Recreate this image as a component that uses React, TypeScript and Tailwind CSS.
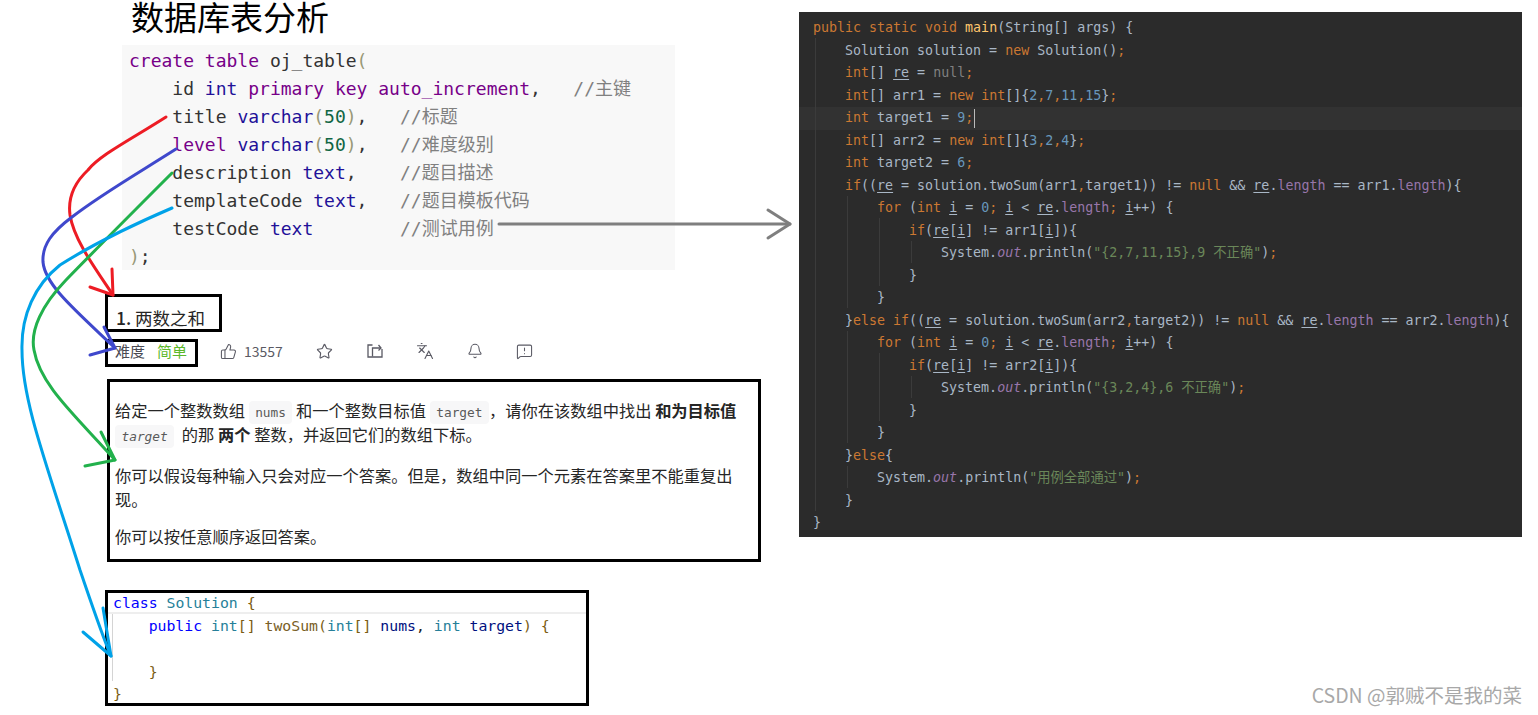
import { Bell, Languages, MessageSquareWarning, Star, ThumbsUp } from "lucide-react";

const monoFont = "[font-family:'DejaVu_Sans_Mono','Noto_Sans_CJK_SC',monospace]";
const sansFont = "[font-family:'Noto_Sans_CJK_SC','Noto_Sans',sans-serif]";

type Token = [string, string?];

// sql block colours
const sKey = "text-[#770088]";
const sType = "text-[#221199]";
const sParen = "text-[#999977]";
const sNum = "text-[#116644]";
const sNote = "text-[#808080]";

const sqlLines: Token[][] = [
  [["create table", sKey], [" oj_table"], ["(", sParen]],
  [["    id "], ["int", sType], [" "], ["primary key auto_increment", sKey], [",   "], ["//主键", sNote]],
  [["    title "], ["varchar", sType], ["(", sParen], ["50", sNum], [")", sParen], [",   "], ["//标题", sNote]],
  [["    "], ["level", sKey], [" "], ["varchar", sType], ["(", sParen], ["50", sNum], [")", sParen], [",   "], ["//难度级别", sNote]],
  [["    description "], ["text", sType], [",    "], ["//题目描述", sNote]],
  [["    templateCode "], ["text", sType], [",   "], ["//题目模板代码", sNote]],
  [["    testCode "], ["text", sType], ["        "], ["//测试用例", sNote]],
  [[")", sParen], [";"]],
];

// idea darcula colours
const kw = "text-[#cc7832]";
const num = "text-[#6897bb]";
const str = "text-[#6a8759]";
const fld = "text-[#9876aa]";
const fldI = "text-[#9876aa] italic";
const fn = "text-[#ffc66d]";
const gray = "text-[#808080]";
const ul = "underline underline-offset-2";

const javaLines: Token[][] = [
  [["public static void ", kw], ["main", fn], ["(String[] args) {"]],
  [["    Solution solution = "], ["new ", kw], ["Solution()"], [";", kw]],
  [["    "], ["int", kw], ["[] "], ["re", ul], [" = "], ["null", gray], [";", kw]],
  [["    "], ["int", kw], ["[] arr1 = "], ["new int", kw], ["[]{"], ["2", num], [",", kw], ["7", num], [",", kw], ["11", num], [",", kw], ["15", num], ["}"], [";", kw]],
  [["    "], ["int ", kw], ["target1 = "], ["9", num], [";", kw]],
  [["    "], ["int", kw], ["[] arr2 = "], ["new int", kw], ["[]{"], ["3", num], [",", kw], ["2", num], [",", kw], ["4", num], ["}"], [";", kw]],
  [["    "], ["int ", kw], ["target2 = "], ["6", num], [";", kw]],
  [["    "], ["if", kw], ["(("], ["re", ul], [" = solution.twoSum(arr1"], [",", kw], ["target1)) != "], ["null ", kw], ["&& "], ["re", ul], ["."], ["length", fld], [" == arr1."], ["length", fld], ["){"]],
  [["        "], ["for ", kw], ["("], ["int ", kw], ["i", ul], [" = "], ["0", num], ["; ", kw], ["i", ul], [" < "], ["re", ul], ["."], ["length", fld], ["; ", kw], ["i", ul], ["++) {"]],
  [["            "], ["if", kw], ["("], ["re", ul], ["["], ["i", ul], ["] != arr1["], ["i", ul], ["]){"]],
  [["                System."], ["out", fldI], [".println("], ["\"{2,7,11,15},9 不正确\"", str], [")"], [";", kw]],
  [["            }"]],
  [["        }"]],
  [["    }"], ["else if", kw], ["(("], ["re", ul], [" = solution.twoSum(arr2"], [",", kw], ["target2)) != "], ["null ", kw], ["&& "], ["re", ul], ["."], ["length", fld], [" == arr2."], ["length", fld], ["){"]],
  [["        "], ["for ", kw], ["("], ["int ", kw], ["i", ul], [" = "], ["0", num], ["; ", kw], ["i", ul], [" < "], ["re", ul], ["."], ["length", fld], ["; ", kw], ["i", ul], ["++) {"]],
  [["            "], ["if", kw], ["("], ["re", ul], ["["], ["i", ul], ["] != arr2["], ["i", ul], ["]){"]],
  [["                System."], ["out", fldI], [".println("], ["\"{3,2,4},6 不正确\"", str], [")"], [";", kw]],
  [["            }"]],
  [["        }"]],
  [["    }"], ["else", kw], ["{"]],
  [["        System."], ["out", fldI], [".println("], ["\"用例全部通过\"", str], [")"], [";", kw]],
  [["    }"]],
  [["}"]],
];

// x, top, bottom inside the page
const guides = [
  [815, 38, 511],
  [847, 196, 308],
  [847, 331, 443],
  [847, 466, 488],
  [879, 218, 286],
  [879, 353, 421],
  [911, 241, 263],
  [911, 376, 398],
];

// vscode light colours
const vBlue = "text-[#0000ff]";
const vType = "text-[#267f99]";
const vFn = "text-[#795e26]";
const vVar = "text-[#001080]";
const vBr = "text-[#7a5c12]";

const solutionLines: Token[][] = [
  [["class", vBlue], [" "], ["Solution", vType], [" "], ["{", vBr]],
  [["    "], ["public", vBlue], [" "], ["int", vType], ["[]", vBr], [" "], ["twoSum", vFn], ["(", vBr], ["int", vType], ["[]", vBr], [" "], ["nums", vVar], [", "], ["int", vType], [" "], ["target", vVar], [")", vBr], [" "], ["{", vBr]],
  [[" "]],
  [["    "], ["}", vBr]],
  [["}", vBr]],
];

const solutionRows = [
  "h-[21px] leading-[20px] border-b-[2px] border-[#eeeeee]",
  "h-[24px] leading-[24px]",
  "h-[22.5px] leading-[22.5px]",
  "h-[22.5px] leading-[22.5px]",
  "h-[22.5px] leading-[22.5px]",
];

function Tokens({ line }: { line: Token[] }) {
  return (
    <>
      {line.map(([text, cls], i) => (
        <span key={i} className={cls}>
          {text}
        </span>
      ))}
    </>
  );
}

function Chip({ children, italic }: { children: string; italic?: boolean }) {
  return (
    <code className={`${monoFont} rounded-[4px] bg-[#f7f7f8] px-[6.5px] py-[4px] text-[12.8px] leading-[18px] text-[#5a5a5a] ${italic ? "italic" : ""}`}>
      {children}
    </code>
  );
}

function ShareIcon() {
  return (
    <svg width="16" height="14" viewBox="0 0 16 14" fill="none" stroke="currentColor" strokeWidth="1.3">
      <path d="M5.5 1H1V13H15V5" />
      <path d="M5.5 12.5V4H13" />
      <path d="M11.5 1L14 4L11.5 6.5" />
    </svg>
  );
}

function Arrows() {
  return (
    <svg className="absolute left-0 top-0 pointer-events-none" width="1538" height="715" fill="none" strokeWidth="3" strokeLinecap="round" strokeLinejoin="round">
      <g stroke="#ed1c24">
        <path d="M166 117C130 140 100 155 88 170C72 185 68 200 70 215C74 240 95 268 113 295" />
        <path d="M112 269L113 295L90 287" />
      </g>
      <g stroke="#3f48cc">
        <path d="M176 149C140 172 100 195 72 217C52 232 42 245 43 262C45 285 75 310 115 348" />
        <path d="M104 327L115 348L90 355" />
      </g>
      <g stroke="#22b14c">
        <path d="M172 173C135 210 100 245 66 280C42 305 30 330 34 350C40 385 75 415 115 460" />
        <path d="M101 432L115 460L85 466" />
      </g>
      <g stroke="#00a2e8">
        <path d="M172 208C130 226 95 243 60 265C35 285 21 315 22 350C22 400 45 460 80 570C92 605 102 635 111 656" />
        <path d="M103 608L111 656L83 632" />
      </g>
      <g stroke="#7f7f7f">
        <path d="M499 224H790" />
        <path d="M768 210L790 224L768 238" />
      </g>
    </svg>
  );
}

export default function App() {
  return (
    <div className={`relative flex h-[715px] w-[1538px] overflow-hidden bg-white ${sansFont}`}>
      {/* left side, the problem */}
      <div className="box-content flex w-[694px] shrink-0 flex-col pl-[105px]">
        <h1 className="h-[45px] pl-[26px] text-[33px] font-normal leading-[38px] text-black [font-family:'Liberation_Sans','Noto_Sans_CJK_SC',sans-serif]">数据库表分析</h1>

        <div className={`ml-[17px] h-[225px] w-[553px] bg-[#f8f8f8] pl-[7px] pt-[2px] text-[18px] leading-[28px] text-[#333333] whitespace-pre ${monoFont}`}>
          {sqlLines.map((line, i) => (
            <div key={i}>
              <Tokens line={line} />
            </div>
          ))}
        </div>

        <div className="mt-[24px] h-[38px] w-[117px] border-[3px] border-black pl-[8px] pt-[9px] text-[17.5px] leading-[24px] text-[#262626]">
          <span className="font-medium">1.</span> 两数之和
        </div>

        <div className="mt-[7px] flex h-[28px] items-start text-[#5a5a64]">
          <div className="flex h-[28px] w-[93px] items-start border-[3px] border-black pl-[7px] text-[15px] leading-[18px]">
            <span className="text-[#4a4a52]">难度</span>
            <span className="ml-[12px] text-[#5cb82a]">简单</span>
          </div>
          <div className="flex h-[24px] items-center">
            <ThumbsUp className="ml-[22px]" size={17} strokeWidth={1.5} />
            <span className="ml-[7px] w-[50px] text-[14px]">13557</span>
            <Star className="ml-[22px]" size={17} strokeWidth={1.6} />
            <div className="ml-[34px] flex"><ShareIcon /></div>
            <Languages className="ml-[33px]" size={18} strokeWidth={1.5} />
            <Bell className="ml-[33px]" size={16} strokeWidth={1.6} />
            <MessageSquareWarning className="ml-[33px]" size={17} strokeWidth={1.5} />
          </div>
        </div>

        <div className="ml-[2px] mt-[12px] h-[183px] w-[654px] border-[3px] border-black pl-[5px] pr-[13px] pt-[17px] text-[16.25px] leading-[23.5px] text-[#262626]">
          <p>
            给定一个整数数组 <Chip>nums</Chip> 和一个整数目标值 <Chip>target</Chip>，请你在该数组中找出 <b>和为目标值</b>
            <span> <Chip italic>target</Chip></span><span className="ml-[4px]"> 的那 </span><b>两个</b> 整数，并返回它们的数组下标。
          </p>
          <p className="mt-[18px]">你可以假设每种输入只会对应一个答案。但是，数组中同一个元素在答案里不能重复出现。</p>
          <p className="mt-[14px]">你可以按任意顺序返回答案。</p>
        </div>

        <div className={`relative mt-[28px] h-[116px] w-[484px] border-[3px] border-black pl-[5px] text-[14.8px] text-[#1e1e1e] whitespace-pre ${monoFont}`}>
          {solutionLines.map((line, i) => (
            <div key={i} className={`${solutionRows[i]} ${i === 0 ? "-ml-[5px] pl-[5px]" : ""}`}>
              <Tokens line={line} />
            </div>
          ))}
          <div className="absolute left-[4px] top-[21px] h-[67px] w-[1px] bg-[#d4d4d4]" />
        </div>
      </div>

      {/* right side, the test main */}
      <div className={`relative mt-[12px] h-[525px] w-[723px] bg-[#2b2b2b] pl-[14px] pt-[5px] text-[13.3px] leading-[22.5px] text-[#a9b7c6] whitespace-pre ${monoFont}`}>
        {javaLines.map((line, i) => (
          <div key={i} className={i === 4 ? "-ml-[14px] flex h-[22.5px] items-stretch bg-[#323232] pl-[14px]" : "h-[22.5px]"}>
            <Tokens line={line} />
            {i === 4 && <span className="my-[2px] ml-[1px] w-[1px] bg-[#bbbbbb]" />}
          </div>
        ))}
        {guides.map(([x, top, bottom]) => (
          <div
            key={`${x}-${top}`}
            className="absolute w-[1px] bg-[#3b3b3b]"
            style={{ left: x - 799, top: top - 12, height: bottom - top }}
          />
        ))}
      </div>

      <Arrows />

      <div className="absolute bottom-[8px] right-[16px] text-[19.5px] leading-[24px] text-[#a8a8a8]">CSDN @郭贼不是我的菜</div>
    </div>
  );
}
